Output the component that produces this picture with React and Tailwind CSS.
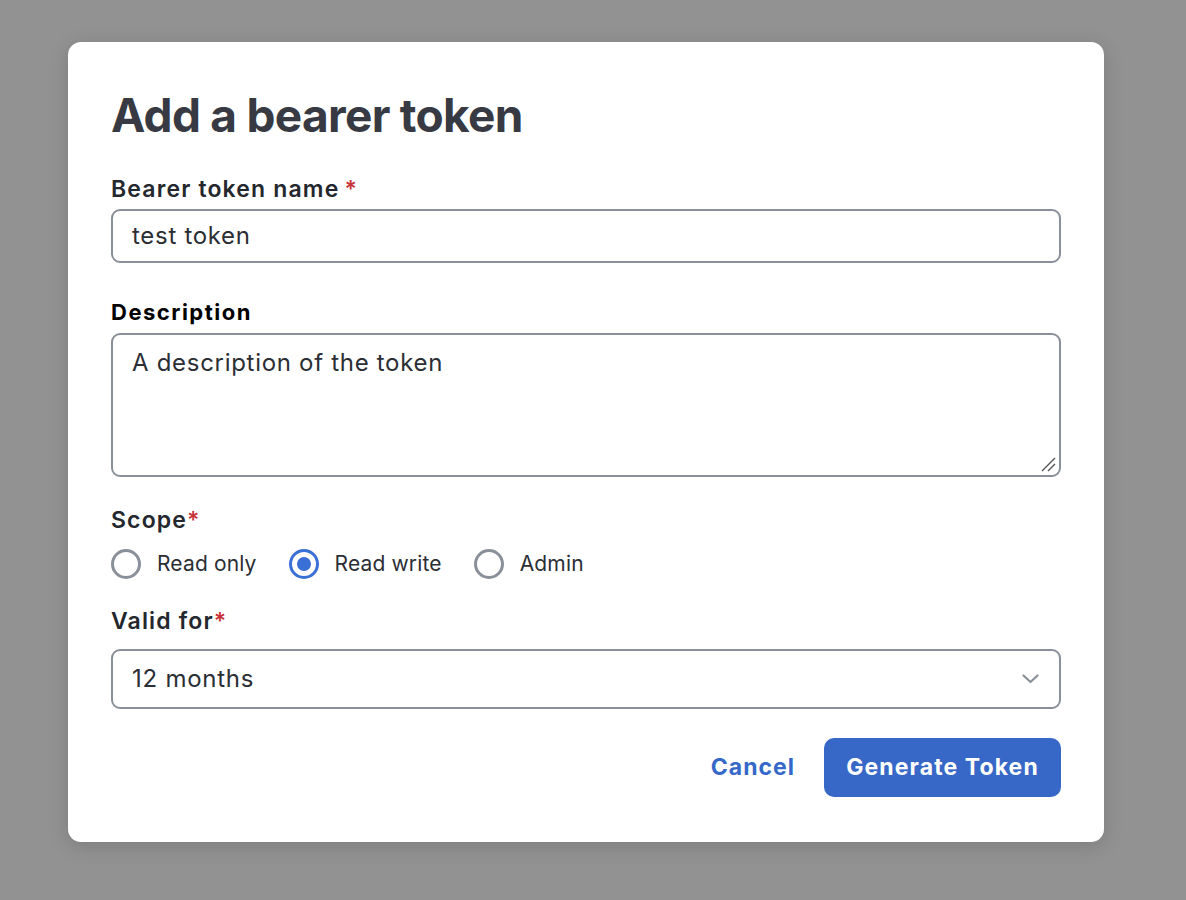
const FONT = { fontFamily: 'Inter, "Noto Sans", sans-serif' }

function Label({ children, required, tight }) {
  return (
    <div className="text-[23px] leading-[28px] font-semibold tracking-[1.15px] text-[#24272d]">
      {children}
      {required && (
        <span className={'text-[#c8323a] ' + (tight ? '' : 'ml-[5px]')}>*</span>
      )}
    </div>
  )
}

function Radio({ label, checked }) {
  return (
    <label className="flex items-center gap-[16px]">
      <span
        className={
          'w-[30px] h-[30px] rounded-full border-[3px] flex items-center justify-center ' +
          (checked ? 'border-[#3a70d6]' : 'border-[#8a9099]')
        }
      >
        {checked && <span className="w-[14px] h-[14px] rounded-full bg-[#3a70d6]" />}
      </span>
      <span className="text-[21px] leading-[28px] tracking-[0.15px] text-[#2b2e34]">{label}</span>
    </label>
  )
}

export default function App() {
  return (
    <div className="min-h-screen bg-[#929292] pl-[68px] pt-[42px]" style={FONT}>
      <div className="w-[1036px] h-[800px] bg-white rounded-[13px] shadow-[0_4px_20px_rgba(0,0,0,0.15)] px-[43px] pt-[45px]">
        <h1 className="text-[46px] leading-[56px] font-bold text-[#373a42] tracking-[-0.7px]">
          Add a bearer token
        </h1>

        <div className="mt-[32px]">
          <Label required>Bearer token name</Label>
          <div className="mt-[6px] h-[54px] border-2 border-[#8a9099] rounded-[9px] px-[19px] flex items-center text-[24px] tracking-[0.7px] text-[#2b2e34]">
            test token
          </div>
        </div>

        <div className="mt-[35px]">
          <div className="text-[22px] leading-[28px] font-bold tracking-[1.5px] text-black">Description</div>
          <div className="relative mt-[7px] h-[144px] border-2 border-[#8a9099] rounded-[9px] px-[19px] pt-[13px] text-[24px] leading-[30px] tracking-[0.7px] text-[#2b2e34]">
            A description of the token
            <svg className="absolute right-[3px] bottom-[3px]" width="15" height="15" viewBox="0 0 15 15">
              <path d="M1 14L14 1M7 14L14 7" stroke="#555" strokeWidth="1.4" />
            </svg>
          </div>
        </div>

        <div className="mt-[29px]">
          <Label required tight>Scope</Label>
          <div className="mt-[15px] flex items-center gap-[32px]">
            <Radio label="Read only" />
            <Radio label="Read write" checked />
            <Radio label="Admin" />
          </div>
        </div>

        <div className="mt-[28px]">
          <Label required tight>Valid for</Label>
          <div className="mt-[14px] h-[60px] border-2 border-[#8a9099] rounded-[9px] pl-[19px] pr-[20px] flex items-center justify-between text-[24px] tracking-[0.75px] text-[#2b2e34]">
            <span>12 months</span>
            <svg width="17" height="10" viewBox="0 0 17 10" fill="none">
              <path d="M1.5 1.5L8.5 8L15.5 1.5" stroke="#8a9099" strokeWidth="2.2" strokeLinecap="round" strokeLinejoin="round" />
            </svg>
          </div>
        </div>

        <div className="mt-[29px] flex justify-end items-center gap-[29px]">
          <button className="text-[23px] font-bold tracking-[1px] text-[#3568c8]">Cancel</button>
          <button className="h-[59px] w-[237px] rounded-[10px] bg-[#3768c8] text-white text-[23px] font-bold tracking-[1.1px]">
            Generate Token
          </button>
        </div>
      </div>
    </div>
  )
}
